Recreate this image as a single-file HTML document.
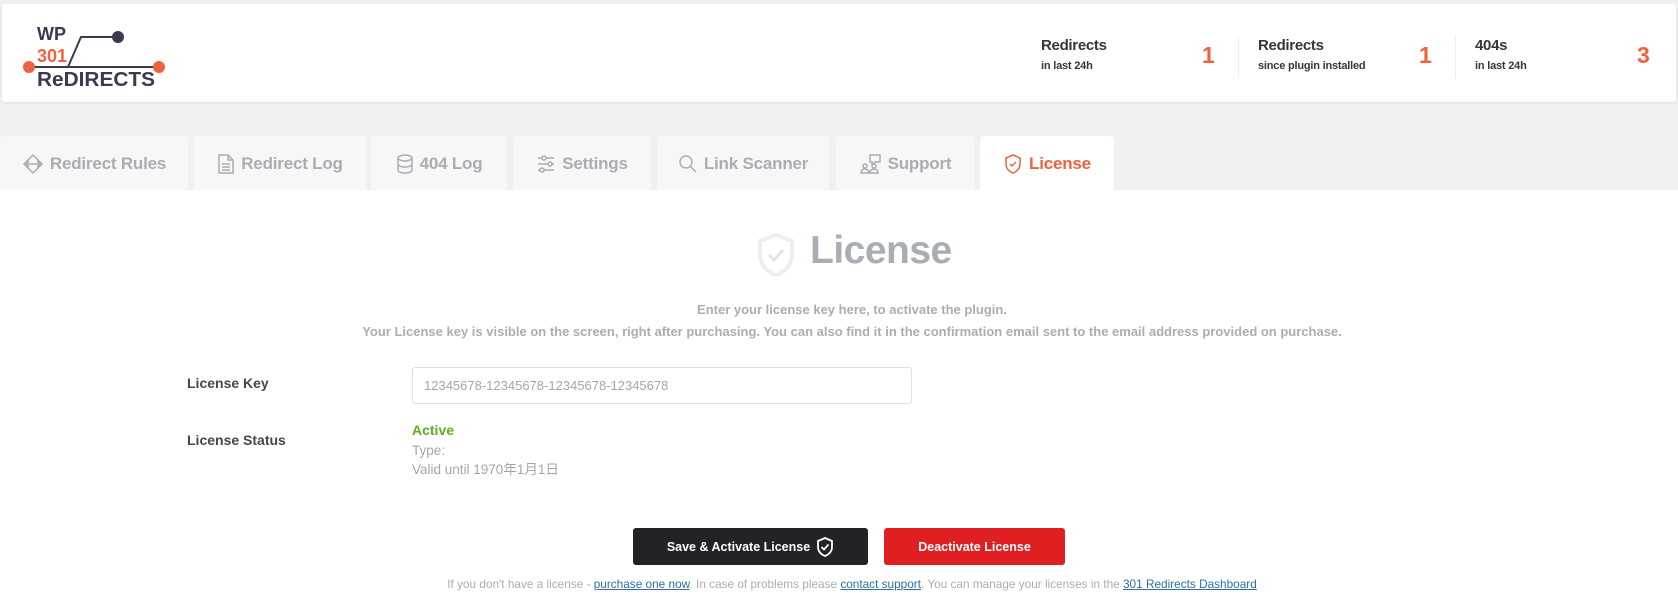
<!DOCTYPE html>
<html><head><meta charset="utf-8"><style>
*{box-sizing:border-box;margin:0;padding:0}
body{width:1678px;height:612px;overflow:hidden;background:#f0f0f0;font-family:"Liberation Sans","Noto Sans CJK JP",sans-serif;position:relative}
.abs{position:absolute}
.hdr{left:2px;top:4px;width:1674px;height:98px;background:#fff;border-radius:3px;box-shadow:0 1px 3px rgba(0,0,0,.08)}
.st{font-weight:bold;color:#33363d;font-size:15px;letter-spacing:-.3px}
.ss{font-weight:bold;color:#33363d;font-size:11px;letter-spacing:-.2px}
.num{color:#f0613e;font-weight:bold;font-size:23px}
.div{width:1px;height:42px;background:#eee;top:36px}
.tab{top:136px;height:55px;background:#f7f7f7;border-radius:4px 4px 0 0;color:#a9aeb4;font-weight:bold;font-size:17px;display:flex;align-items:center;justify-content:center;gap:6px;letter-spacing:-.2px}
.tab svg{stroke:#a9aeb4;fill:none;stroke-width:1.5}
.main{left:0;top:190px;width:1678px;height:422px;background:#fff}
.c{text-align:center;left:0;width:1704px}
.lbl{font-weight:bold;color:#44474d;font-size:14px;left:187px}
a{color:#2f6ea5;text-decoration:underline}
</style></head><body>
<div class="abs hdr"></div>
<svg class="abs" style="left:18px;top:16px" width="150" height="72" viewBox="0 0 150 72">
<text x="19" y="24" font-family="Liberation Sans" font-weight="bold" font-size="18" fill="#393a4f">WP</text>
<text x="19" y="46" font-family="Liberation Sans" font-weight="bold" font-size="18" fill="#f0613e">301</text>
<path d="M11 51 H140 M50 51 L63 21 H99" stroke="#393a4f" stroke-width="2" fill="none"/>
<circle cx="100" cy="21" r="6" fill="#393a4f"/>
<circle cx="11" cy="51" r="6" fill="#f0613e"/><circle cx="141" cy="51" r="6" fill="#f0613e"/>
<text x="19" y="70" font-family="Liberation Sans" font-weight="bold" font-size="20" fill="#393a4f" textLength="118" lengthAdjust="spacingAndGlyphs">ReDIRECTS</text>
</svg>
<div class="abs st" style="left:1041px;top:37px">Redirects</div>
<div class="abs ss" style="left:1041px;top:60px">in last 24h</div>
<div class="abs num" style="left:1202px;top:42px">1</div>
<div class="abs div" style="left:1238px"></div>
<div class="abs st" style="left:1258px;top:37px">Redirects</div>
<div class="abs ss" style="left:1258px;top:60px">since plugin installed</div>
<div class="abs num" style="left:1419px;top:42px">1</div>
<div class="abs div" style="left:1455px"></div>
<div class="abs st" style="left:1475px;top:37px">404s</div>
<div class="abs ss" style="left:1475px;top:60px">in last 24h</div>
<div class="abs num" style="left:1637px;top:42px">3</div>

<div class="abs tab" style="left:0;width:188px"><svg width="22" height="22" viewBox="0 0 22 22"><path d="M11 2 L20 11 L11 20 L2 11Z M4 11H18 M15 8l3 3-3 3 M7 8l-3 3 3 3"/></svg>Redirect Rules</div>
<div class="abs tab" style="left:194px;width:172px"><svg width="18" height="22" viewBox="0 0 18 22"><path d="M2 2h9l5 5v13H2z M11 2v5h5 M5 11h8 M5 14h8 M5 17h8"/></svg>Redirect Log</div>
<div class="abs tab" style="left:371px;width:136px"><svg width="18" height="22" viewBox="0 0 18 22"><ellipse cx="9" cy="5" rx="7" ry="3"/><path d="M2 5v12c0 1.7 3 3 7 3s7-1.3 7-3V5 M2 11c0 1.7 3 3 7 3s7-1.3 7-3"/></svg>404 Log</div>
<div class="abs tab" style="left:513px;width:138px"><svg width="20" height="22" viewBox="0 0 20 22"><path d="M2 5h4 M10 5h8 M2 11h10 M16 11h2 M2 17h2 M8 17h10"/><circle cx="8" cy="5" r="2"/><circle cx="14" cy="11" r="2"/><circle cx="6" cy="17" r="2"/></svg>Settings</div>
<div class="abs tab" style="left:657px;width:172px"><svg width="20" height="22" viewBox="0 0 20 22"><circle cx="8" cy="9" r="6"/><path d="M12.5 13.5 L18 19"/></svg>Link Scanner</div>
<div class="abs tab" style="left:836px;width:139px"><svg width="22" height="22" viewBox="0 0 22 22"><path d="M10 2h10v7h-5l-3 3v-3h-2z"/><circle cx="5" cy="13" r="2"/><circle cx="14" cy="13" r="2"/><path d="M1 20c0-3 2-4 4-4s4 1 4 4z M10 20c0-3 2-4 4-4s4 1 4 4z"/></svg>Support</div>
<div class="abs tab" style="left:980px;width:134px;height:56px;background:#fff;color:#f0613e"><svg width="20" height="22" viewBox="0 0 20 22" style="stroke:#f0613e"><path d="M10 2 L17 5 V11 C17 16 13 19 10 20 C7 19 3 16 3 11 V5Z M7 11 l2 2 4-4"/></svg>License</div>

<div class="abs main"></div>
<svg class="abs" style="left:756px;top:232px" width="40" height="46" viewBox="0 0 40 46"><path d="M20 3 L36 9 V23 C36 34 27 41 20 43 C13 41 4 34 4 23 V9Z" fill="none" stroke="#eceef0" stroke-width="4"/><path d="M13 23 l5 5 9-10" fill="none" stroke="#e2e4e7" stroke-width="3"/></svg>
<div class="abs" style="left:810px;top:229px;font-size:39px;font-weight:bold;color:#a9aeb4;letter-spacing:-.5px">License</div>
<div class="abs c" style="top:299px;font-size:13px;font-weight:bold;color:#a9aeb4;line-height:22px">Enter your license key here, to activate the plugin.<br>Your License key is visible on the screen, right after purchasing. You can also find it in the confirmation email sent to the email address provided on purchase.</div>
<div class="abs lbl" style="top:375px">License Key</div>
<div class="abs" style="left:412px;top:367px;width:500px;height:37px;border:1px solid #dfe1e4;border-radius:3px;font-size:13px;color:#a2a6ab;padding:10px 11px">12345678-12345678-12345678-12345678</div>
<div class="abs lbl" style="top:432px">License Status</div>
<div class="abs" style="left:412px;top:422px;font-size:14px;font-weight:bold;color:#5fae21">Active</div>
<div class="abs" style="left:412px;top:441px;font-size:13.5px;color:#a2a6ab;line-height:19px">Type:<br>Valid until 1970年1月1日</div>
<div class="abs" style="left:633px;top:528px;width:235px;height:37px;background:#212327;border-radius:3px;color:#fff;font-size:12.5px;font-weight:bold;display:flex;align-items:center;justify-content:center;gap:6px">Save &amp; Activate License <svg width="18" height="20" viewBox="0 0 18 20"><path d="M9 1 L16 4 V10 C16 15 12 18 9 19 C6 18 2 15 2 10 V4Z M5.5 10 l2.5 2.5 4.5-5" fill="none" stroke="#fff" stroke-width="1.8"/></svg></div>
<div class="abs" style="left:884px;top:528px;width:181px;height:37px;background:#e01f22;border-radius:3px;color:#fff;font-size:12.5px;font-weight:bold;display:flex;align-items:center;justify-content:center">Deactivate License</div>
<div class="abs c" style="top:577px;font-size:11.8px;color:#a9aeb4">If you don't have a license - <a>purchase one now</a>. In case of problems please <a>contact support</a>. You can manage your licenses in the <a>301 Redirects Dashboard</a></div>
</body></html>
